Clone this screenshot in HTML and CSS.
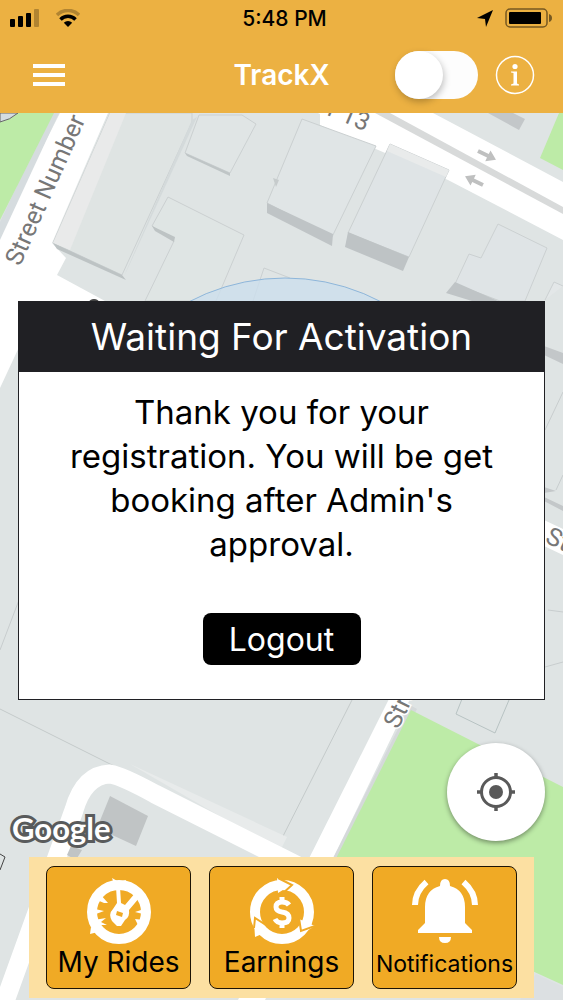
FILE: index.html
```html
<!DOCTYPE html>
<html lang="en">
<head>
  <meta charset="UTF-8" />
  <meta name="viewport" content="width=device-width, initial-scale=1.0" />
  <title>TrackX</title>
  <link rel="stylesheet" href="styles.css">
</head>
<body>
  <div class="screen">
    <header class="header">
      <div class="status-bar">
        <div class="status-left">
          <svg width="30" height="18" viewBox="0 0 30 18">
            <rect x="0" y="10" width="5" height="8" rx="1"/>
            <rect x="8" y="7" width="5" height="11" rx="1"/>
            <rect x="16" y="4" width="5" height="14" rx="1"/>
            <rect x="24" y="0" width="5" height="18" rx="1" opacity="0.25"/>
          </svg>
          <svg width="24" height="18" viewBox="0 0 24 18">
            <path d="M1 6 A15.500 15.500 0 0 1 23 6" fill="none" stroke="#000" stroke-width="3.500" opacity="0.25"/>
            <path d="M4.500 10.500 A10.500 10.500 0 0 1 19.500 10.500" fill="none" stroke="#000" stroke-width="3.500"/>
            <path d="M7.800 13.800 A6 6 0 0 1 16.200 13.800 L12 18 Z"/>
          </svg>
        </div>
        <span class="time">5:48 PM</span>
        <div class="status-right">
          <svg width="16" height="17" viewBox="0 0 16 17">
            <path d="M16 0 L9 17 L8 9 L0 8 Z"/>
          </svg>
          <svg width="48" height="20" viewBox="0 0 48 20">
            <rect x="1" y="1" width="41" height="18" rx="4" fill="none" stroke="#000" stroke-width="1.500" opacity="0.5"/>
            <rect x="4" y="4" width="32" height="12" rx="1"/>
            <path d="M44 6 Q47 7 47 10 Q47 13 44 14 Z" opacity="0.5"/>
          </svg>
        </div>
      </div>
      <div class="nav-bar">
        <button class="icon-button menu" aria-label="Menu">
          <svg width="32" height="22" viewBox="0 0 32 22" fill="#fff">
            <rect width="32" height="4"/>
            <rect y="9" width="32" height="4"/>
            <rect y="18" width="32" height="4"/>
          </svg>
        </button>
        <h1>TrackX</h1>
        <div class="nav-right">
          <input type="checkbox" class="switch" aria-label="Online" />
          <button class="icon-button" aria-label="Info">
            <svg width="40" height="40" viewBox="0 0 40 40">
              <circle cx="20" cy="20" r="18.500" fill="none" stroke="#fff" stroke-width="1.500"/>
              <circle cx="20" cy="11.500" r="2.600" fill="#fff"/>
              <path d="M16 16.500 H22 V28.500 L24 29.500 V30.500 H16 V29.500 L18.500 28.500 V18 L16 17.500 Z" fill="#fff"/>
            </svg>
          </button>
        </div>
      </div>
    </header>

    <main class="map">
      <svg class="map-canvas" viewBox="0 113 563 887" preserveAspectRatio="xMidYMin slice">
        <rect y="113" width="563" height="887" fill="#dfe4e4"/>
        <!-- left street and park -->
        <path d="M108 113 L52 243 L66 258 L57 275 L105 301 H20 V345 L0 388 V230 L60 113 Z" fill="#fff"/>
        <path d="M51 113 H59 L0 240 V222 Z" fill="#d6dcdf"/>
        <path d="M0 113 H54 L0 220 Z" fill="#bdeba7"/>
        <path d="M0 113 H18 Q10 120 0 122 Z" fill="#d4dde2" stroke="#666" stroke-width="1"/>
        <!-- top right road -->
        <path d="M320 113 H433 L563 182 V240 L448 180 L320 125 Z" fill="#fff"/>
        <path d="M375 113 H390 L563 207 V214 Z" fill="#d8dada"/>
        <path d="M563 113 V170 L540 158 L559 113 Z" fill="#bdeba7"/>
        <path d="M488 113 H513 L525 119 L519 130 Z" fill="#c3c7c9"/>
        <g fill="#bfc0c0">
          <path d="M0 -2 H11 V-6 L20 0 L11 6 V2 H0 Z" transform="translate(478 151) rotate(26)"/>
          <path d="M0 -2 H11 V-6 L20 0 L11 6 V2 H0 Z" transform="translate(483 185) rotate(206)"/>
        </g>
        <!-- buildings -->
        <g stroke="#cbd0d1" stroke-width="1">
          <path d="M110 113 L53 243 L122 275 L192 122 V113 Z" fill="#dfe4e3"/>
          <path d="M110 113 L53 243 L70 250 L126 113 Z" fill="#e9eaea" stroke="none"/>
          <path d="M53 243 L122 275 L126 280 L57 249 Z" fill="#bdc3c4" stroke="none"/>
          <path d="M192 120 L197 117 L128 268 L124 276 Z" fill="#d4dadb" stroke="none"/>
          <path d="M185 153 L199 115 H242 L256 124 L230 173 Z" fill="#e0e5e5"/>
          <path d="M185 153 L230 173 V176 L187 156 Z" fill="#bfc5c6" stroke="none"/>
          <path d="M145 301 L174 241 L152 226 L168 197 L244 235 L216 301 Z" fill="#dfe5e4"/>
          <path d="M152 226 L175 237 L174 242 L155 231 Z" fill="#bdc3c4" stroke="none"/>
          <path d="M267 203 L302 119 L376 146 L332 237 Z" fill="#e0e5e6"/>
          <path d="M267 203 L333 234 L332 246 L267 213 Z" fill="#bfc4c6" stroke="none"/>
          <path d="M273 178 L279 180 L276 187 Z" fill="#c6cbcc" stroke="none"/>
          <path d="M348 233 L390 144 L449 170 L409 257 Z" fill="#dfe4e6"/>
          <path d="M390 144 L449 170 L446 177 L387 151 Z" fill="#e9ebeb" stroke="none"/>
          <path d="M348 232 L409 257 L403 271 L345 247 Z" fill="#bec3c5" stroke="none"/>
          <path d="M455 284 L469 254 L481 258 L498 224 L547 248 L525 301 H500 Z" fill="#dfe4e6"/>
          <path d="M455 282 L498 301 H472 L446 293 Z" fill="#bfc4c6" stroke="none"/>
          <path d="M253 301 L264 268 L290 278" fill="none"/>
          <path d="M545 300 L554 282 L563 286" fill="#e3e7e8"/>
        </g>
        <circle cx="285" cy="484" r="206" fill="#ccdfec" fill-opacity="0.8" stroke="#8eb6da" stroke-width="1"/>
        <ellipse cx="94" cy="302" rx="5" ry="3" fill="#444"/>
        <!-- strips beside the dialog -->
        <path d="M544 346 L563 353 V364 L544 355 Z" fill="#c3c7c9"/>
        <path d="M544 487 L556 491 L544 493 Z M544 497 L563 506 V511 L544 501 Z" fill="#c3c7c9"/>
        <path d="M544 520 L563 529 V555 L544 546 Z" fill="#fff"/>
        <path d="M563 392 L545 430 M563 475 L556 490 M548 610 L563 612 M545 667 L563 662 M19 600 L0 650" stroke="#c8cdce" fill="none"/>
        <!-- lower roads -->
        <path d="M0 709 L110 764 L276 850 L352 700" fill="none" stroke="#c4caca"/>
        <path d="M130 764 L287 837 L280 851 Z" fill="#e8ebeb"/>
        <path d="M0 1015 L74 810 Q84 775 110 774 Q122 776 155 794 L310 872" fill="none" stroke="#fff" stroke-width="19"/>
        <path d="M389 699 H410 L265 1000 H238 Z" fill="#fff"/>
        <path d="M410 705 L417 709 L340 860 H332 Z" fill="#d5d9da"/>
        <path d="M411 710 L563 787 V985 L530 970 L500 910 H310 Z" fill="#bdeba7"/>
        <path d="M536 974 L563 987 V1000 H520 Z" fill="#dce0e2"/>
        <path d="M110 796 L148 816 L136 846 L97 828 Z" fill="#c0c4c5"/>
        <path d="M71 846 L82 850 L76 860 L67 855 Z" fill="#c0c4c5"/>
        <path d="M462 699 L456 714 L495 733 L509 700" fill="none" stroke="#b8c3c3"/>
        <path d="M0 854 L5 857 L0 870" fill="none" stroke="#444"/>
        <g class="street-name">
          <text transform="translate(20 267) rotate(-66)">Street Number</text>
          <text transform="translate(301 104) rotate(23)">ber 13</text>
          <text transform="translate(398 730) rotate(-64)">Street</text>
          <text transform="translate(544 542) rotate(25)">Street</text>
        </g>
      </svg>

      <section class="dialog" role="dialog" aria-labelledby="dialog-title">
        <h2 id="dialog-title">Waiting For Activation</h2>
        <p>Thank you for your registration. You will be get booking after Admin's approval.</p>
        <button class="logout">Logout</button>
      </section>

      <div class="map-controls">
        <span class="google">Google</span>
        <button class="locate" aria-label="My location">
          <svg width="40" height="40" viewBox="0 0 40 40" fill="none" stroke="#595959">
            <circle cx="20" cy="20" r="14.500" stroke-width="3"/>
            <path d="M20 1 V6 M20 34 V39 M1 20 H6 M34 20 H39" stroke-width="3.500"/>
            <circle cx="20" cy="20" r="7" fill="#595959" stroke="none"/>
          </svg>
        </button>
      </div>

      <nav class="tabs">
        <button class="tab">
          <svg width="66" height="68" viewBox="0 0 66 68">
            <circle cx="33" cy="35" r="27" fill="none" stroke="#fff" stroke-width="10"/>
            <path d="M28 7 L26 1 L33 5 L40 3 L38 9 Z M5 50 L4 57 L12 55 Z" fill="#fff"/>
            <path d="M30 10 H34 L35 26 L39 28 L50 15 L54 20 L43 33 Q44 40 39 43 L35 49 H31 L26 44 Q22 37 27 32 L31 26 Z" fill="#fff"/>
            <path d="M14 17 L22 26 L18 26 L11 23 Z M9 32 L18 34 L10 37 Z M8 43 L20 41 L15 45 L21 48 L10 48 Z M58 32 L49 35 L57 37 Z M49 42 L58 43 L54 52 Z" fill="#fff"/>
            <path d="M31 34 L37 36 L36 40 L30 38 Z" fill="#f0aa25"/>
          </svg>
          <span>My Rides</span>
        </button>
        <button class="tab">
          <svg width="66" height="68" viewBox="0 0 66 68">
            <circle cx="33" cy="35" r="27" fill="none" stroke="#fff" stroke-width="10"/>
            <path d="M28 1 L42 8 L29 16 Z" fill="#fff"/>
            <path d="M29 1 L43 8 L33 17" fill="none" stroke="#f0aa25" stroke-width="2"/>
            <path d="M50 42 L66 49 L56 55 L51 57 Z" fill="#fff"/>
            <path d="M50 41 L52 54 L66 49" fill="none" stroke="#f0aa25" stroke-width="2"/>
            <path d="M6 60 L5 43 L20 54 Z" fill="#fff"/>
            <path d="M5 51 L6 41 L20 50" fill="none" stroke="#f0aa25" stroke-width="2"/>
            <path d="M40 28 Q38 25 33 25 Q27 25 27 30 Q27 34 33 35 Q40 36 40 41 Q40 46 33 46 Q28 46 26 42 M33 20 V26 M33 45 V51" fill="none" stroke="#fff" stroke-width="5"/>
          </svg>
          <span>Earnings</span>
        </button>
        <button class="tab tab-small">
          <svg width="68" height="68" viewBox="0 0 68 68" fill="#fff">
            <path d="M34 2 Q39 2 39 9 Q54 13 54 30 V46 L61 53 V56 H7 V53 L14 46 V30 Q14 13 29 9 Q29 2 34 2 Z"/>
            <path d="M28 60 H40 Q40 66 34 66 Q28 66 28 60 Z"/>
            <path d="M15.500 5 Q4 15 4 28 M52.500 5 Q64 15 64 28" fill="none" stroke="#fff" stroke-width="6"/>
          </svg>
          <span>Notifications</span>
        </button>
      </nav>
    </main>
  </div>
</body>
</html>
```
FILE: styles.css
```css
* {
  box-sizing: border-box;
}
body {
  margin: 0;
  font-family: Inter, "Liberation Sans", sans-serif;
  color: #000;
}
h1, h2, p {
  margin: 0;
  font-weight: normal;
}
button {
  padding: 0;
  border: none;
  background: none;
  font-family: inherit;
  color: inherit;
  cursor: pointer;
}
svg {
  display: block;
}
.screen {
  display: flex;
  flex-direction: column;
  min-height: 100vh;
}
.header {
  background-color: #ecb142;
}
.status-bar {
  display: grid;
  grid-template-columns: 1fr auto 1fr;
  align-items: center;
  height: 36px;
  padding: 0 10px;
}
.status-left, .status-right {
  display: flex;
  align-items: center;
  gap: 16px;
}
.status-right {
  justify-content: flex-end;
  gap: 12px;
}
.time {
  padding-left: 6px;
  font-size: 21px;
  font-weight: 500;
}
.nav-bar {
  display: grid;
  grid-template-columns: 1fr auto 1fr;
  align-items: center;
  height: 77px;
  padding: 0 28px;
}
.menu {
  justify-self: start;
  padding-left: 5px;
}
.nav-bar h1 {
  color: #fff;
  font-size: 28px;
  font-weight: 600;
}
.nav-right {
  display: flex;
  align-items: center;
  justify-content: flex-end;
  gap: 17px;
}
.switch {
  appearance: none;
  width: 83px;
  height: 48px;
  margin: 0;
  border-radius: 24px;
  background-color: #fdfdfd;
}
.switch::before {
  content: "";
  display: block;
  width: 48px;
  height: 48px;
  border-radius: 50%;
  background-color: #fff;
  box-shadow: 1px 3px 7px rgba(0,0,0,0.25);
}
.switch:checked::before {
  margin-left: auto;
}
.map {
  position: relative;
  flex: 1;
  display: flex;
  flex-direction: column;
  padding: 188px 18px 2px;
}
.map-canvas {
  position: absolute;
  inset: 0;
  width: 100%;
  height: 100%;
}
.street-name {
  font-family: Roboto, sans-serif;
  font-size: 25px;
  fill: #777;
  stroke: #fff;
  stroke-width: 3px;
  paint-order: stroke;
}
.dialog {
  position: relative;
  border: 1px solid #202024;
  background-color: #fff;
  text-align: center;
  padding-bottom: 34px;
}
.dialog h2 {
  background-color: #202024;
  color: #fff;
  font-size: 37px;
  line-height: 70px;
}
.dialog p {
  padding: 18px 40px 0;
  font-size: 33px;
  line-height: 44px;
}
.logout {
  width: 158px;
  height: 52px;
  margin-top: 47px;
  border-radius: 8px;
  background-color: #000;
  color: #fff;
  font-size: 32px;
}
.map-controls {
  position: relative;
  display: flex;
  justify-content: space-between;
  align-items: flex-end;
  margin: 43px 0 16px;
}
.google {
  margin-left: -6px;
  color: #fff;
  font-family: Lato, sans-serif;
  font-size: 31px;
  font-weight: bold;
  line-height: 26px;
  -webkit-text-stroke: 6px #595b5c;
  paint-order: stroke fill;
}
.locate {
  display: grid;
  place-items: center;
  width: 98px;
  height: 98px;
  border-radius: 50%;
  background-color: #fff;
  box-shadow: 0 2px 5px rgba(0,0,0,0.4);
}
.tabs {
  position: relative;
  display: grid;
  grid-template-columns: 1fr 1fr 1fr;
  gap: 18px;
  margin: 0 11px;
  padding: 9px 17px;
  background-color: #fce0a2;
}
.tab {
  display: flex;
  flex-direction: column;
  align-items: center;
  height: 123px;
  padding-top: 10px;
  border: 1px solid #1c1406;
  border-radius: 8px;
  background-color: #f0aa25;
  font-size: 28px;
  line-height: 34px;
}
.tab-small {
  font-size: 23px;
  line-height: 38px;
}
```
